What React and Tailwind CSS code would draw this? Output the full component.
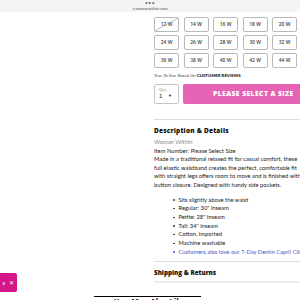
export default function App() {
  const sizes = ["12 W", "14 W", "16 W", "18 W", "20 W", "24 W", "26 W", "28 W", "30 W", "32 W", "36 W", "38 W", "40 W", "42 W", "44 W"];
  const bullets = [
    "Sits slightly above the waist",
    "Regular: 30\" inseam",
    "Petite: 28\" inseam",
    "Tall: 34\" inseam",
    "Cotton, imported",
    "Machine washable",
  ];

  return (
    <div className="relative w-[300px] h-[300px] overflow-hidden bg-white font-['Lato',sans-serif] text-[#222]">
      {/* browser bar */}
      <div className="h-[12px] bg-[#f5f5f5] flex flex-col items-center">
        <div className="text-[5px] leading-[6px] text-[#666] tracking-[0.5px]">•••</div>
        <div className="text-[4px] leading-[5px] text-[#555]">a womanwithin.com</div>
      </div>

      <div className="flex">
        <div className="w-[154px] shrink-0" />

        <div className="w-[175px] shrink-0">
          {/* sizes */}
          <div className="grid grid-cols-[repeat(5,25px)] gap-x-[4.5px] gap-y-[3px] mt-[5px]">
            {sizes.map((s, i) => (
              <div
                key={s}
                className="relative h-[15px] border border-[#b9b9b9] rounded-[2px] flex items-center justify-center text-[5px] font-semibold text-[#444] font-['Open_Sans',sans-serif]"
              >
                {s}
                {i === 0 && (
                  <svg className="absolute inset-0 w-full h-full" viewBox="0 0 25 15" preserveAspectRatio="none">
                    <line x1="0" y1="15" x2="25" y2="0" stroke="#888" strokeWidth="0.6" />
                  </svg>
                )}
              </div>
            ))}
          </div>

          <div className="mt-[5px] text-[4.3px] leading-[5px] text-[#444]">
            True To Size Based On <span className="font-black text-[#111]">CUSTOMER REVIEWS</span>
          </div>

          {/* qty + button */}
          <div className="mt-[6px] flex gap-[4px] h-[20px]">
            <div className="w-[25px] shrink-0 border border-[#c4c4c4] rounded-[2px] px-[4px] pt-[2px]">
              <div className="text-[4px] leading-[5px] text-[#888]">Qty</div>
              <div className="flex items-center justify-between text-[6px] leading-[8px] text-[#111] font-['Liberation_Sans',sans-serif]">
                <span>1</span>
                <span className="text-[4px] mr-[2px]">▼</span>
              </div>
            </div>
            <div className="flex-1 bg-[#e664b6] rounded-[2px] flex items-center pl-[30px] text-white text-[6.8px] font-black tracking-[0.4px] font-['Open_Sans',sans-serif]">
              PLEASE SELECT A SIZE
            </div>
          </div>

          {/* description */}
          <div className="mt-[15px] border-t border-[#dcdcdc] pt-[6px]">
            <div className="text-[6.5px] leading-[9px] font-black text-[#111] font-['Open_Sans',sans-serif] tracking-[0.2px]">
              Description &amp; Details
            </div>
            <div className="mt-[3px] text-[5.8px] leading-[8.6px] whitespace-nowrap">
              <div className="text-[#888]">Woman Within</div>
              <div>Item Number: Please Select Size</div>
              <div>Made in a traditional relaxed fit for casual comfort, these</div>
              <div>full elastic waistband creates the perfect, comfortable fit</div>
              <div>with straight legs offers room to move and is finished with</div>
              <div>button closure. Designed with handy side pockets.</div>
            </div>
            <ul className="mt-[6px] pl-[19px] text-[5.8px] leading-[8.7px] whitespace-nowrap">
              {bullets.map((b) => (
                <li key={b} className="flex items-center gap-[4px]">
                  <span className="w-[1.5px] h-[1.5px] bg-[#333] rounded-full" />
                  {b}
                </li>
              ))}
              <li className="flex items-center gap-[4px] text-[#3a5ac8]">
                <span className="w-[1.5px] h-[1.5px] bg-[#3a5ac8] rounded-full" />
                Customers also love our 7-Day Denim Capri! Click here
              </li>
            </ul>
          </div>

          <div className="mt-[5px] border-t border-[#dcdcdc] pt-[7px] pb-[4px] border-b-2 border-b-[#ececec]">
            <div className="text-[6.3px] leading-[8px] font-black text-[#111] font-['Open_Sans',sans-serif]">
              Shipping &amp; Returns
            </div>
          </div>
        </div>
      </div>

      {/* you may also like */}
      <div className="mt-[13px] flex flex-col items-center">
        <div className="w-[107px] border-t-[1.5px] border-black ml-[-6px]" />
        <div className="text-[8px] leading-[10px] font-bold text-[#111] font-['Open_Sans',sans-serif]">You May Also Like</div>
      </div>

      {/* floating tab */}
      <div className="absolute left-0 top-[273px] w-[17px] h-[19px] bg-[#d5168b] rounded-r-[2px] flex items-center justify-end pr-[3px] gap-[4px] text-white text-[6px]">
        <span className="-ml-[2px]">s</span>
        <span>✕</span>
      </div>
    </div>
  );
}
